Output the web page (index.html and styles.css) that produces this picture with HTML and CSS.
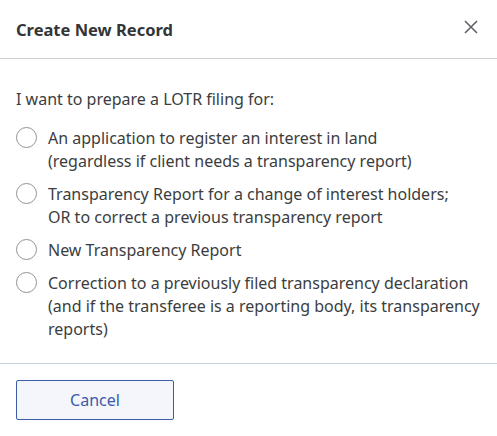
FILE: index.html
```html
<!DOCTYPE html>
<html>
<head>
<meta charset="utf-8">
<link rel="stylesheet" href="styles.css">
</head>
<body>
<div class="dialog">
  <div class="header">
    <h1 class="title">Create New Record</h1>
    <button class="close" aria-label="Close">
      <svg width="14" height="14" viewBox="0 0 14 14"><path d="M1 1L13 13M13 1L1 13" stroke="#5f6266" stroke-width="1.6" fill="none"/></svg>
    </button>
  </div>
  <div class="body">
    <p class="intro">I want to prepare a LOTR filing for:</p>
    <div class="options">
      <label class="option"><span class="radio"></span><span class="label">An application to register an interest in land<br>(regardless if client needs a transparency report)</span></label>
      <label class="option"><span class="radio"></span><span class="label">Transparency Report for a change of interest holders;<br>OR to correct a previous transparency report</span></label>
      <label class="option"><span class="radio"></span><span class="label">New Transparency Report</span></label>
      <label class="option"><span class="radio"></span><span class="label">Correction to a previously filed transparency declaration (and if the transferee is a reporting body, its transparency reports)</span></label>
    </div>
  </div>
  <div class="footer">
    <button class="cancel">Cancel</button>
  </div>
</div>
</body>
</html>
```
FILE: styles.css
```css
* { box-sizing: border-box; }
html, body { margin: 0; padding: 0; background: #fff; }
body { font-family: "Noto Sans", "Open Sans", sans-serif; color: #3b3d40; }
.dialog { width: 497px; height: 436px; background: #fff; display: flex; flex-direction: column; }
.header { height: 62px; display: flex; align-items: center; justify-content: space-between; padding: 0 16px; border-bottom: 1px solid #d0d0d0; }
.title { margin: 0; font-size: 16.5px; font-weight: 700; color: #333538; }
.close { border: 0; background: none; padding: 0; width: 14px; height: 14px; display: flex; margin-top: -4px; margin-right: 3px; cursor: pointer; }
.body { padding: 29px 16px 22px 16px; border-bottom: 1px solid #c9d3da; }
.intro { margin: 0 0 16px 0; font-size: 16px; line-height: 23px; }
.options { display: flex; flex-direction: column; gap: 10px; }
.option { display: flex; align-items: flex-start; gap: 11px; font-size: 16px; line-height: 23px; }
.radio { flex: none; width: 21px; height: 21px; border: 1px solid #8e9297; border-radius: 50%; margin-top: 0; }
.label { flex: 1; }
.footer { padding: 16px 16px; }
.cancel { width: 158px; height: 40px; border: 1px solid #3c5ba9; border-radius: 2px; background: #f4f6fb; color: #3c5ba9; font-family: "Noto Sans", "Open Sans", sans-serif; font-size: 16px; cursor: pointer; }
```
